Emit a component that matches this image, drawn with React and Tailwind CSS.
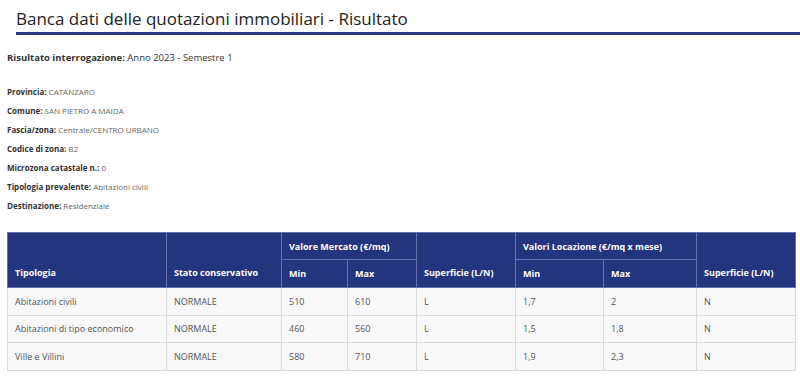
import React from "react";

const details = [
  ["Provincia:", "CATANZARO"],
  ["Comune:", "SAN PIETRO A MAIDA"],
  ["Fascia/zona:", "Centrale/CENTRO URBANO"],
  ["Codice di zona:", "B2"],
  ["Microzona catastale n.:", "0"],
  ["Tipologia prevalente:", "Abitazioni civili"],
  ["Destinazione:", "Residenziale"],
];

const rows = [
  ["Abitazioni civili", "NORMALE", "510", "610", "L", "1,7", "2", "N"],
  ["Abitazioni di tipo economico", "NORMALE", "460", "560", "L", "1,5", "1,8", "N"],
  ["Ville e Villini", "NORMALE", "580", "710", "L", "1,9", "2,3", "N"],
];

const th = "border border-[#6470ad] px-[7px]";
const thTall = "border border-[#6470ad] px-[7px] align-bottom pb-[8px]";

export default function App() {
  return (
    <div className="w-[800px] h-[376px] bg-white overflow-hidden font-['Open_Sans',sans-serif]">
      {/* header */}
      <div className="ml-4 pt-[6px] border-b-[3px] border-[#2b3a86]">
        <h1 className="text-[17px] leading-[26px] text-[#222]">
          Banca dati delle quotazioni immobiliari - Risultato
        </h1>
      </div>

      <div className="px-[7px]">
        <p className="mt-[16px] text-[9.5px] text-[#333]">
          <span className="font-bold">Risultato interrogazione:</span> Anno 2023 - Semestre 1
        </p>

        <div className="mt-[21px] flex flex-col gap-[8px]">
          {details.map(([label, value]) => (
            <p key={label} className="text-[8px] leading-[11px] text-[#666]">
              <span className="font-bold text-[#333]">{label}</span> {value}
            </p>
          ))}
        </div>

        <table className="mt-[21px] w-[788px] border-collapse text-[9px] table-fixed">
          <colgroup>
            <col className="w-[159px]" />
            <col className="w-[115px]" />
            <col className="w-[66px]" />
            <col className="w-[69px]" />
            <col className="w-[99px]" />
            <col className="w-[88px]" />
            <col className="w-[93px]" />
            <col className="w-[99px]" />
          </colgroup>
          <thead className="bg-[#243580] text-white font-bold text-left">
            <tr className="h-[27px]">
              <th rowSpan={2} className={thTall}>Tipologia</th>
              <th rowSpan={2} className={thTall}>Stato conservativo</th>
              <th colSpan={2} className={th}>Valore Mercato (€/mq)</th>
              <th rowSpan={2} className={thTall}>Superficie (L/N)</th>
              <th colSpan={2} className={th}>Valori Locazione (€/mq x mese)</th>
              <th rowSpan={2} className={thTall}>Superficie (L/N)</th>
            </tr>
            <tr className="h-[28px]">
              <th className={th}>Min</th>
              <th className={th}>Max</th>
              <th className={th}>Min</th>
              <th className={th}>Max</th>
            </tr>
          </thead>
          <tbody className="bg-[#f8f8f8] text-[#555]">
            {rows.map((r) => (
              <tr key={r[0]} className="h-[27.5px]">
                {r.map((c, i) => (
                  <td key={i} className="border border-[#dcdcdc] px-[7px]">{c}</td>
                ))}
              </tr>
            ))}
          </tbody>
        </table>
      </div>
    </div>
  );
}
